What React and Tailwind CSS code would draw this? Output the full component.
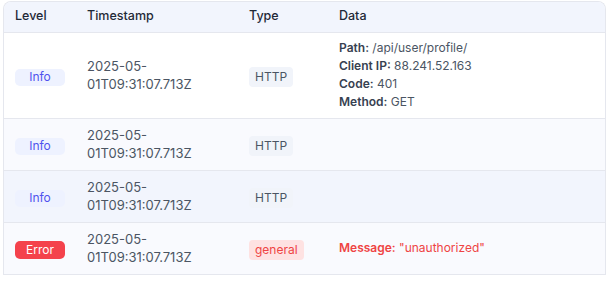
const rows = [
  {
    level: "Info",
    time: "2025-05-01T09:31:07.713Z",
    type: "HTTP",
    bg: "bg-white",
    h: "h-[86px]",
    data: [
      ["Path", "/api/user/profile/"],
      ["Client IP", "88.241.52.163"],
      ["Code", "401"],
      ["Method", "GET"]
    ]
  },
  { level: "Info", time: "2025-05-01T09:31:07.713Z", type: "HTTP", bg: "bg-[#f9fafe]", h: "h-[52px]", data: [] },
  { level: "Info", time: "2025-05-01T09:31:07.713Z", type: "HTTP", bg: "bg-[#f2f5fd]", h: "h-[52px]", data: [] },
  {
    level: "Error",
    time: "2025-05-01T09:31:07.713Z",
    type: "general",
    bg: "bg-[#f9fafe]",
    h: "h-[52px]",
    message: '"unauthorized"'
  }
];

const LevelBadge = ({ level }) =>
  level === "Error" ? (
    <span className="inline-flex h-[18px] w-[50px] items-center justify-center rounded-[5px] bg-[#f4424c] text-[12px] text-white">
      Error
    </span>
  ) : (
    <span className="inline-flex h-[17px] w-[50px] items-center justify-center rounded-[5px] bg-[#eef2ff] text-[12px] text-[#4f52ee]">
      Info
    </span>
  );

const TypeBadge = ({ type }) =>
  type === "general" ? (
    <span className="inline-flex h-[20px] items-center rounded-[4px] bg-[#fee2e2] px-[6px] text-[12px] text-[#ef4444]">
      general
    </span>
  ) : (
    <span className="inline-flex h-[20px] items-center rounded-[4px] bg-[#f1f4fa] px-[6px] text-[12px] text-[#4b5563]">
      HTTP
    </span>
  );

export default function App() {
  return (
    <div className="min-h-screen bg-white pl-[3px] pt-[1px] font-['Inter',sans-serif]">
      <div className="w-[603px] overflow-hidden rounded-tl-[8px] rounded-tr-[8px] border-l border-r border-t border-[#e5e7ee]">
        <table className="w-full table-fixed border-collapse text-left">
          <colgroup>
            <col className="w-[72px]" />
            <col className="w-[162px]" />
            <col className="w-[90px]" />
            <col />
          </colgroup>
          <thead>
            <tr className="h-[30px] border-b border-[#e5e7ee] bg-[#f2f5fd] text-[12.5px] text-[#1f2937]">
              <th className="p-0 pl-[11px] font-medium">Level</th>
              <th className="p-0 pl-[11px] font-medium">Timestamp</th>
              <th className="p-0 pl-[11px] font-medium">Type</th>
              <th className="p-0 pl-[11px] font-medium">Data</th>
            </tr>
          </thead>
          <tbody>
            {rows.map((row, i) => (
              <tr key={i} className={`border-b border-[#e5e7ee] ${row.bg} ${row.h}`}>
                <td className="p-0 pl-[11px] align-middle">
                  <LevelBadge level={row.level} />
                </td>
                <td className="p-0 pl-[11px] pr-[20px] align-middle text-[13px] leading-[18px] text-[#4b5563]">
                  {row.time.replace("-01T", "-\u200b01T")}
                </td>
                <td className="p-0 pl-[11px] align-middle">
                  <TypeBadge type={row.type} />
                </td>
                <td className="p-0 pl-[11px] align-middle text-[12px] leading-[18px] text-[#4b5563]">
                  {row.data &&
                    row.data.map(([k, v]) => (
                      <div key={k}>
                        <span className="font-semibold text-[#374151]">{k}:</span> {v}
                      </div>
                    ))}
                  {row.message && (
                    <div className="text-[#ef4444]">
                      <span className="font-semibold">Message:</span> {row.message}
                    </div>
                  )}
                </td>
              </tr>
            ))}
          </tbody>
        </table>
      </div>
    </div>
  );
}
